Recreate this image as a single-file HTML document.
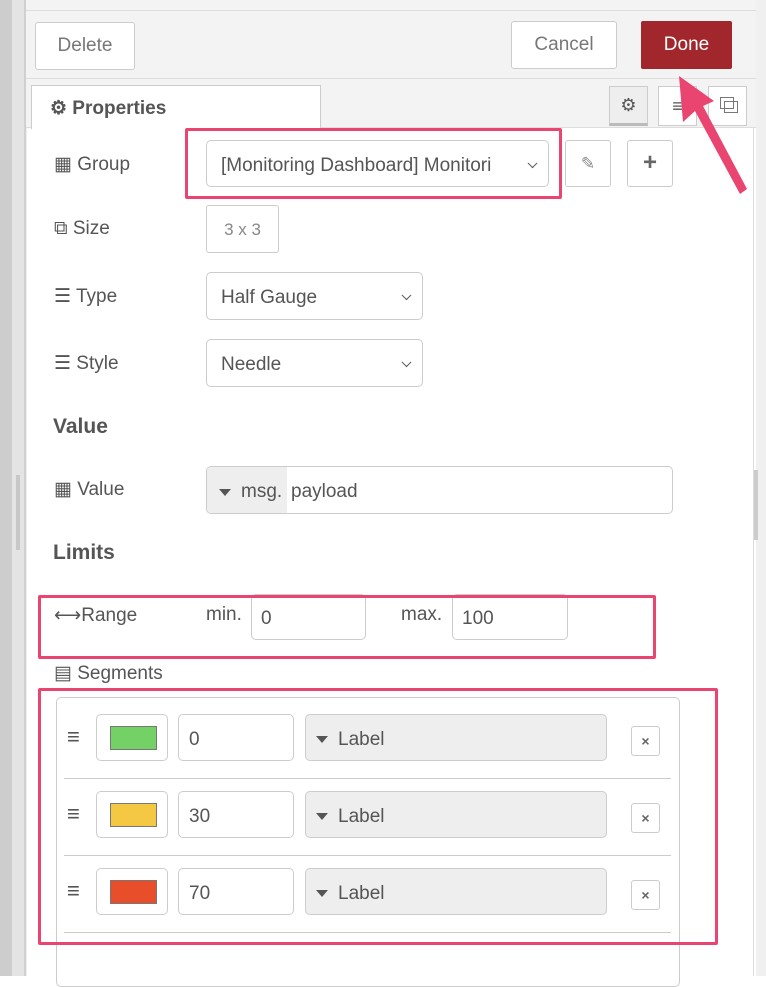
<!DOCTYPE html>
<html><head><meta charset="utf-8"><style>
*{box-sizing:border-box;margin:0;padding:0}
body{width:766px;height:976px;overflow:hidden;background:#fff;font-family:"Liberation Sans",sans-serif;color:#555;position:relative;font-size:19px}
.a{position:absolute}
.btn{position:absolute;border:1px solid #ccc;border-radius:3px;background:#fff}
.in{position:absolute;border:1px solid #ccc;border-radius:5px;background:#fff;display:flex;align-items:center;padding-left:14px;padding-top:4px;color:#555}
.pink{position:absolute;border:3px solid #ea4471;border-radius:2px}
.lbl{position:absolute;font-size:19px;color:#555}
.h{position:absolute;font-size:21px;font-weight:bold;color:#555}
.chev{position:absolute;right:12px;top:50%;width:7px;height:7px;border-right:1.5px solid #555;border-bottom:1.5px solid #555;transform:translateY(-60%) rotate(45deg)}
.tri{display:inline-block;width:0;height:0;border-left:6px solid transparent;border-right:6px solid transparent;border-top:7px solid #555;margin-right:10px}
</style></head><body>
<div class="a" style="left:0;top:0;width:12px;height:976px;background:#cdcdcd"></div>
<div class="a" style="left:12px;top:0;width:12px;height:976px;background:#e4e4e4"></div>
<div class="a" style="left:16px;top:475px;width:4px;height:75px;background:#c8c8c8"></div>
<div class="a" style="left:24px;top:0;width:2px;height:976px;background:#d0d0d0"></div>
<div class="a" style="left:26px;top:0;width:730px;height:128px;background:#f3f3f3"></div>
<div class="a" style="left:26px;top:10px;width:730px;height:1px;background:#ddd"></div>
<div class="a" style="left:26px;top:78px;width:730px;height:1px;background:#ddd"></div>
<div class="a" style="left:756px;top:0;width:10px;height:976px;background:#f0f0f0"></div>
<div class="a" style="left:754px;top:470px;width:4px;height:70px;background:#ccc"></div>
<div class="btn" style="left:35px;top:22px;width:100px;height:48px;display:flex;align-items:center;justify-content:center;font-size:19px;color:#777">Delete</div>
<div class="btn" style="left:511px;top:21px;width:106px;height:48px;display:flex;align-items:center;justify-content:center;font-size:19px;color:#777">Cancel</div>
<div class="a" style="left:641px;top:21px;width:91px;height:48px;background:#a1272d;border-radius:2px;color:#fff;display:flex;align-items:center;justify-content:center;font-size:19px">Done</div>
<div class="a" style="left:26px;top:127px;width:730px;height:1px;background:#ddd"></div>
<div class="a" style="left:31px;top:85px;width:290px;height:44px;background:#fff;border:1px solid #ccc;border-bottom:none;font-weight:bold;font-size:19px;color:#555;padding:11px 0 0 18px">⚙ Properties</div>
<div class="a" style="left:609px;top:86px;width:39px;height:40px;background:#eee;border:1px solid #ccc;border-bottom:3px solid #bbb;text-align:center;line-height:36px;font-size:18px">⚙</div>
<div class="btn" style="left:658px;top:86px;width:39px;height:40px;border-radius:0;text-align:center;line-height:38px;font-size:18px">≡</div>
<div class="btn" style="left:708px;top:86px;width:39px;height:40px;border-radius:0"><div class="a" style="left:11px;top:10px;width:14px;height:12px;border:1.5px solid #777"></div><div class="a" style="left:15px;top:14px;width:14px;height:12px;border:1.5px solid #777"></div></div>
<div class="a" style="left:26px;top:128px;width:728px;height:848px;border-left:1px solid #eee;border-right:1px solid #ddd"></div>

<div class="lbl" style="left:54px;top:153px">▦ Group</div>
<div class="in" style="left:206px;top:140px;width:343px;height:47px">[Monitoring Dashboard] Monitori<div class="chev"></div></div>
<div class="btn" style="left:565px;top:140px;width:46px;height:47px;text-align:center;line-height:45px;color:#888;font-size:17px">✎</div>
<div class="btn" style="left:627px;top:140px;width:46px;height:47px;text-align:center;line-height:43px;color:#666;font-size:24px;font-weight:bold">+</div>
<div class="pink" style="left:185px;top:128px;width:377px;height:71px"></div>

<div class="lbl" style="left:54px;top:218px">⧉ Size</div>
<div class="btn" style="left:206px;top:205px;width:73px;height:48px;text-align:center;line-height:48px;color:#888;font-size:17px">3 x 3</div>
<div class="lbl" style="left:54px;top:285px">☰ Type</div>
<div class="in" style="left:206px;top:272px;width:217px;height:48px">Half Gauge<div class="chev"></div></div>
<div class="lbl" style="left:54px;top:352px">☰ Style</div>
<div class="in" style="left:206px;top:339px;width:217px;height:48px">Needle<div class="chev"></div></div>

<div class="h" style="left:53px;top:415px">Value</div>
<div class="lbl" style="left:54px;top:478px">▦ Value</div>
<div class="in" style="left:206px;top:466px;width:467px;height:48px;padding-left:0;padding-top:0;overflow:hidden"><div style="background:#eee;height:100%;width:80px;display:flex;align-items:center;padding-left:12px;padding-top:4px"><span class="tri"></span>msg.</div><span style="padding-left:4px;padding-top:4px">payload</span></div>

<div class="h" style="left:53px;top:541px">Limits</div>
<div class="lbl" style="left:54px;top:604px">⟷Range</div>
<div class="lbl" style="left:206px;top:604px">min.</div>
<div class="in" style="left:251px;top:594px;width:115px;height:46px;padding-left:9px">0</div>
<div class="lbl" style="left:401px;top:604px">max.</div>
<div class="in" style="left:452px;top:594px;width:116px;height:46px;padding-left:9px">100</div>
<div class="pink" style="left:38px;top:595px;width:618px;height:64px"></div>

<div class="lbl" style="left:54px;top:662px">▤ Segments</div>
<div class="a" style="left:56px;top:697px;width:624px;height:290px;border:1px solid #ccc;border-radius:5px"></div>

<div class="a" style="left:64px;top:778px;width:607px;height:1px;background:#ccc"></div>
<div class="a" style="left:64px;top:855px;width:607px;height:1px;background:#ccc"></div>
<div class="a" style="left:64px;top:932px;width:607px;height:1px;background:#ccc"></div>

<div class="a" style="left:67px;top:724px;font-size:22px;color:#555;font-weight:bold">≡</div>
<div class="btn" style="left:96px;top:714px;width:72px;height:47px;border-radius:5px"><div class="a" style="left:13px;top:11px;width:47px;height:24px;background:#74d166;border:1px solid #777"></div></div>
<div class="in" style="left:178px;top:714px;width:116px;height:47px;padding-left:10px">0</div>
<div class="in" style="left:305px;top:714px;width:302px;height:47px;background:#eee;padding-left:10px"><span class="tri"></span>Label</div>
<div class="btn" style="left:631px;top:726px;width:29px;height:30px;text-align:center;line-height:28px;font-size:14px;font-weight:bold;color:#666">×</div>

<div class="a" style="left:67px;top:801px;font-size:22px;color:#555;font-weight:bold">≡</div>
<div class="btn" style="left:96px;top:791px;width:72px;height:47px;border-radius:5px"><div class="a" style="left:13px;top:11px;width:47px;height:24px;background:#f5c844;border:1px solid #777"></div></div>
<div class="in" style="left:178px;top:791px;width:116px;height:47px;padding-left:10px">30</div>
<div class="in" style="left:305px;top:791px;width:302px;height:47px;background:#eee;padding-left:10px"><span class="tri"></span>Label</div>
<div class="btn" style="left:631px;top:803px;width:29px;height:30px;text-align:center;line-height:28px;font-size:14px;font-weight:bold;color:#666">×</div>

<div class="a" style="left:67px;top:878px;font-size:22px;color:#555;font-weight:bold">≡</div>
<div class="btn" style="left:96px;top:868px;width:72px;height:47px;border-radius:5px"><div class="a" style="left:13px;top:11px;width:47px;height:24px;background:#e84e2a;border:1px solid #777"></div></div>
<div class="in" style="left:178px;top:868px;width:116px;height:47px;padding-left:10px">70</div>
<div class="in" style="left:305px;top:868px;width:302px;height:47px;background:#eee;padding-left:10px"><span class="tri"></span>Label</div>
<div class="btn" style="left:631px;top:880px;width:29px;height:30px;text-align:center;line-height:28px;font-size:14px;font-weight:bold;color:#666">×</div>

<div class="pink" style="left:38px;top:688px;width:680px;height:257px"></div>

<svg class="a" style="left:0;top:0" width="766" height="976"><polygon points="679,76 714,101 703,106 747,189 740,194 695,111 683,122" fill="#ea4471"/></svg>
</body></html>
